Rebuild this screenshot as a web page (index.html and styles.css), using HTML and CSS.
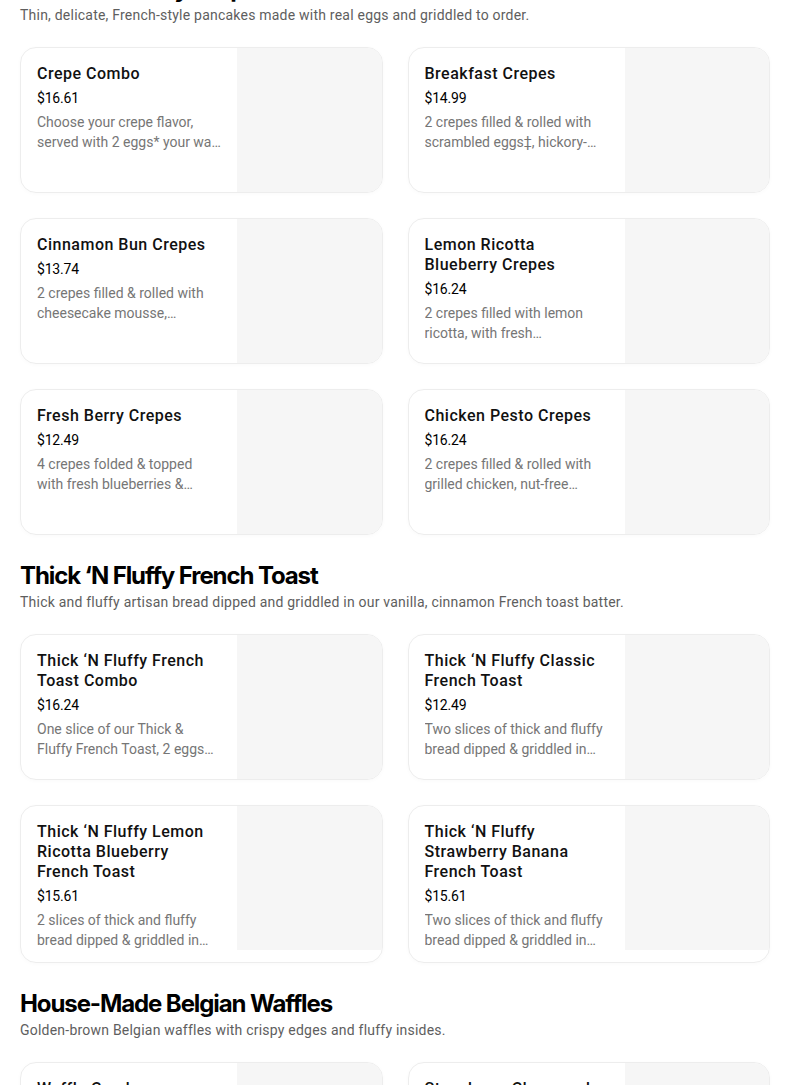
FILE: index.html
```html
<!DOCTYPE html>
<html lang="en">
<head>
<meta charset="utf-8">
<title>Menu</title>
<link rel="stylesheet" href="styles.css">
</head>
<body>
<main class="menu">
  <section class="section">
    <h2 class="section-title">Sweet &amp; Savory Crepes</h2>
    <p class="section-sub">Thin, delicate, French-style pancakes made with real eggs and griddled to order.</p>
    <div class="grid">
      <article class="card">
        <div class="info">
          <h3 class="name">Crepe Combo</h3>
          <div class="price">$16.61</div>
          <p class="desc">Choose your crepe flavor, served with 2 eggs* your wa…</p>
        </div>
        <div class="thumb"></div>
      </article>
      <article class="card">
        <div class="info">
          <h3 class="name">Breakfast Crepes</h3>
          <div class="price">$14.99</div>
          <p class="desc">2 crepes filled &amp; rolled with scrambled eggs‡, hickory-…</p>
        </div>
        <div class="thumb"></div>
      </article>
      <article class="card">
        <div class="info">
          <h3 class="name">Cinnamon Bun Crepes</h3>
          <div class="price">$13.74</div>
          <p class="desc">2 crepes filled &amp; rolled with cheesecake mousse,…</p>
        </div>
        <div class="thumb"></div>
      </article>
      <article class="card">
        <div class="info">
          <h3 class="name">Lemon Ricotta Blueberry Crepes</h3>
          <div class="price">$16.24</div>
          <p class="desc">2 crepes filled with lemon ricotta, with fresh…</p>
        </div>
        <div class="thumb"></div>
      </article>
      <article class="card">
        <div class="info">
          <h3 class="name">Fresh Berry Crepes</h3>
          <div class="price">$12.49</div>
          <p class="desc">4 crepes folded &amp; topped with fresh blueberries &amp;…</p>
        </div>
        <div class="thumb"></div>
      </article>
      <article class="card">
        <div class="info">
          <h3 class="name">Chicken Pesto Crepes</h3>
          <div class="price">$16.24</div>
          <p class="desc">2 crepes filled &amp; rolled with grilled chicken, nut-free…</p>
        </div>
        <div class="thumb"></div>
      </article>
    </div>
  </section>

  <section class="section">
    <h2 class="section-title">Thick ‘N Fluffy French Toast</h2>
    <p class="section-sub">Thick and fluffy artisan bread dipped and griddled in our vanilla, cinnamon French toast batter.</p>
    <div class="grid">
      <article class="card">
        <div class="info">
          <h3 class="name">Thick ‘N Fluffy French Toast Combo</h3>
          <div class="price">$16.24</div>
          <p class="desc">One slice of our Thick &amp; Fluffy French Toast, 2 eggs…</p>
        </div>
        <div class="thumb"></div>
      </article>
      <article class="card">
        <div class="info">
          <h3 class="name">Thick ‘N Fluffy Classic French Toast</h3>
          <div class="price">$12.49</div>
          <p class="desc">Two slices of thick and fluffy bread dipped &amp; griddled in…</p>
        </div>
        <div class="thumb"></div>
      </article>
      <article class="card">
        <div class="info">
          <h3 class="name">Thick ‘N Fluffy Lemon Ricotta Blueberry French Toast</h3>
          <div class="price">$15.61</div>
          <p class="desc">2 slices of thick and fluffy bread dipped &amp; griddled in…</p>
        </div>
        <div class="thumb"></div>
      </article>
      <article class="card">
        <div class="info">
          <h3 class="name">Thick ‘N Fluffy Strawberry Banana French Toast</h3>
          <div class="price">$15.61</div>
          <p class="desc">Two slices of thick and fluffy bread dipped &amp; griddled in…</p>
        </div>
        <div class="thumb"></div>
      </article>
    </div>
  </section>

  <section class="section">
    <h2 class="section-title">House-Made Belgian Waffles</h2>
    <p class="section-sub">Golden-brown Belgian waffles with crispy edges and fluffy insides.</p>
    <div class="grid">
      <article class="card">
        <div class="info">
          <h3 class="name">Waffle Combo</h3>
          <div class="price">$15.61</div>
          <p class="desc">Our house-made Belgian waffle, served with 2 eggs…</p>
        </div>
        <div class="thumb"></div>
      </article>
      <article class="card">
        <div class="info">
          <h3 class="name">Strawberry Cheesecake Waffle</h3>
          <div class="price">$13.74</div>
          <p class="desc">Belgian waffle topped with cheesecake mousse and…</p>
        </div>
        <div class="thumb"></div>
      </article>
    </div>
  </section>
</main>
</body>
</html>
```

FILE: styles.css
```css
* { box-sizing: border-box; }
html, body { margin: 0; padding: 0; background: #fff; }
body {
  font-family: Roboto, "Liberation Sans", Arial, sans-serif;
  color: #000;
  overflow: hidden;
}
.menu {
  width: 750px;
  margin: -27px 0 0 20px;
}
.section { margin-bottom: 25px; }
.section-title {
  margin: 0;
  font-family: Inter, Roboto, sans-serif;
  font-size: 24px;
  line-height: 32px;
  font-weight: 700;
  letter-spacing: -1.1px;
}
.section-sub {
  margin: 0 0 22px;
  font-size: 14px;
  line-height: 20px;
  color: #5e5e5e;
  letter-spacing: 0.22px;
}
.grid {
  display: grid;
  grid-template-columns: 1fr 1fr;
  column-gap: 25px;
  row-gap: 25px;
  align-items: start;
}
.card {
  display: flex;
  border: 1px solid #ededed;
  border-radius: 16px;
  overflow: hidden;
  box-shadow: 0 1px 4px rgba(0,0,0,0.025);
  min-height: 146px;
}
.info {
  width: 216px;
  flex: 0 0 216px;
  padding: 16px 16px 12px;
}
.name {
  margin: 0;
  font-size: 16px;
  line-height: 20px;
  font-weight: 500;
  letter-spacing: 0.5px;
  color: #111;
}
.price {
  margin-top: 4px;
  font-size: 14px;
  line-height: 20px;
  letter-spacing: -0.2px;
}
.desc {
  margin: 4px 0 0;
  font-size: 14px;
  line-height: 20px;
  color: #767676;
  letter-spacing: 0;
  display: -webkit-box;
  -webkit-line-clamp: 2;
  -webkit-box-orient: vertical;
  overflow: hidden;
}
.thumb {
  flex: 1;
  height: 144px;
  background: #f6f6f6;
}
```
